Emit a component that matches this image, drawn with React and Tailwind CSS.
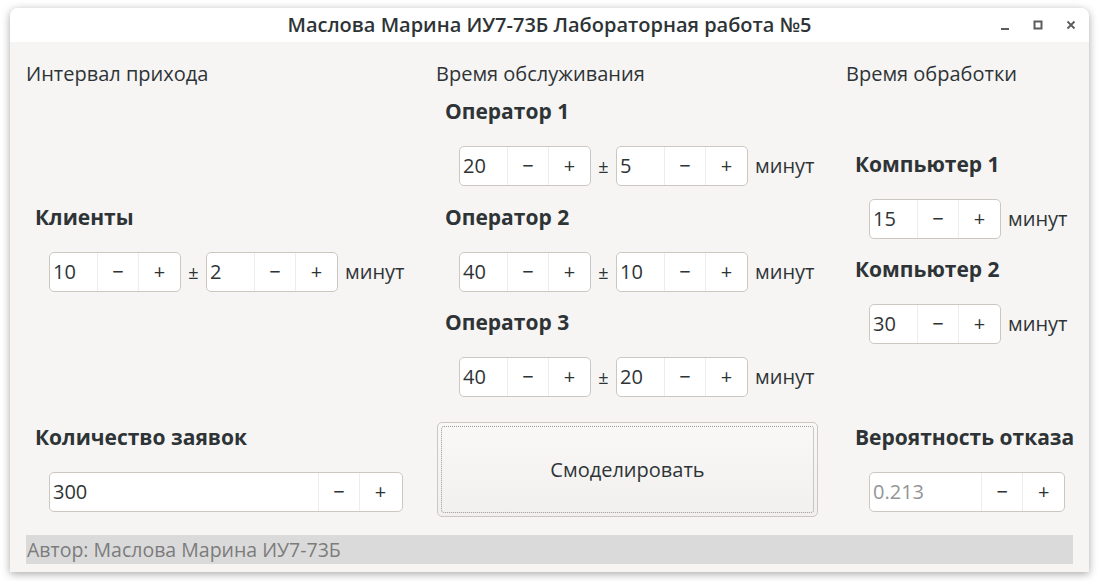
import React from "react";

const font = { fontFamily: '"Open Sans", "Noto Sans", sans-serif' };

function SpinBox({ value, entry = 47, muted = false }) {
  return (
    <div className="flex h-[40px] rounded-[5px] border border-[#cdc7c2] bg-white overflow-hidden">
      <div
        className={`flex items-center pl-[3px] text-[20px] ${muted ? "text-[#929595]" : "text-[#2e3436]"}`}
        style={{ width: entry }}
      >
        {value}
      </div>
      <div className="flex w-[41px] items-center justify-center border-l border-[#f1ece8] text-[20px] text-[#2e3436]">
        −
      </div>
      <div className="flex w-[42px] items-center justify-center border-l border-[#f1ece8] text-[20px] text-[#2e3436]">
        +
      </div>
    </div>
  );
}

function RangeRow({ mean, spread, className = "" }) {
  return (
    <div className={`flex items-center ml-[23px] ${className}`}>
      <SpinBox value={mean} />
      <span className="w-[25px] text-center text-[18px] text-[#2e3436]">±</span>
      <SpinBox value={spread} />
      <span className="ml-[7px] text-[20px] text-[#2e3436]">минут</span>
    </div>
  );
}

function Label({ children, className = "" }) {
  return (
    <div className={`ml-[9px] h-[24px] leading-[24px] text-[21px] font-bold text-[#2e3436] whitespace-nowrap ${className}`}>
      {children}
    </div>
  );
}

function Header({ children }) {
  return (
    <div className="h-[24px] leading-[24px] text-[20px] text-[#2e3436]">{children}</div>
  );
}

export default function App() {
  return (
    <div className="w-[1099px] h-[581px] bg-white pt-[8px] pl-[10px]" style={font}>
      <div className="w-[1079px] h-[564px] flex flex-col rounded-t-[8px] bg-[#f6f5f4] shadow-[0_2px_8px_rgba(0,0,0,0.35)] overflow-hidden">
        {/* Title bar */}
        <div className="relative flex h-[34px] shrink-0 items-center justify-center bg-white">
          <span className="text-[20px] font-semibold text-[#2e3436]">
            Маслова Марина ИУ7-73Б Лабораторная работа №5
          </span>
          <div className="absolute right-[10px] top-0 flex h-[34px] items-center gap-[17px] text-[#5c5c5c]">
            <svg width="16" height="16" viewBox="0 0 16 16">
              <rect x="4" y="11" width="8" height="2" fill="currentColor" />
            </svg>
            <svg width="16" height="16" viewBox="0 0 16 16">
              <rect x="4.5" y="4.5" width="7" height="7" fill="none" stroke="currentColor" strokeWidth="2" />
            </svg>
            <svg width="16" height="16" viewBox="0 0 16 16">
              <path d="M4.5 4.5 L11.5 11.5 M11.5 4.5 L4.5 11.5" stroke="currentColor" strokeWidth="1.8" />
            </svg>
          </div>
        </div>

        {/* Content */}
        <div className="flex flex-1 flex-col px-[16px]">
          <div className="grid grid-cols-[410px_410px_1fr] pt-[20px]">
            {/* Column 1 */}
            <div className="flex flex-col">
              <Header>Интервал прихода</Header>
              <Label className="mt-[119px]">Клиенты</Label>
              <RangeRow mean="10" spread="2" className="mt-[23px]" />
              <Label className="mt-[133px]">Количество заявок</Label>
              <div className="ml-[23px] mt-[23px] w-[354px]">
                <SpinBox value="300" entry={268} />
              </div>
            </div>

            {/* Column 2 */}
            <div className="flex flex-col">
              <Header>Время обслуживания</Header>
              <Label className="mt-[13px]">Оператор 1</Label>
              <RangeRow mean="20" spread="5" className="mt-[23px]" />
              <Label className="mt-[19px]">Оператор 2</Label>
              <RangeRow mean="40" spread="10" className="mt-[23px]" />
              <Label className="mt-[18px]">Оператор 3</Label>
              <RangeRow mean="40" spread="20" className="mt-[23px]" />
              <button className="ml-[1px] mt-[25px] flex h-[95px] w-[381px] items-center justify-center rounded-[5px] border border-[#cdc7c2] bg-gradient-to-b from-[#f9f8f7] to-[#f1f0ee] p-[3px]">
                <span className="flex h-full w-full items-center justify-center rounded-[3px] border border-dotted border-[#9a9a9a] text-[20px] text-[#2e3436]">
                  Смоделировать
                </span>
              </button>
            </div>

            {/* Column 3 */}
            <div className="flex flex-col">
              <Header>Время обработки</Header>
              <Label className="mt-[66px]">Компьютер 1</Label>
              <div className="ml-[23px] mt-[23px] flex items-center">
                <SpinBox value="15" />
                <span className="ml-[7px] text-[20px] text-[#2e3436]">минут</span>
              </div>
              <Label className="mt-[18px]">Компьютер 2</Label>
              <div className="ml-[23px] mt-[23px] flex items-center">
                <SpinBox value="30" />
                <span className="ml-[7px] text-[20px] text-[#2e3436]">минут</span>
              </div>
              <Label className="mt-[81px]">Вероятность отказа</Label>
              <div className="ml-[23px] mt-[23px] w-[196px]">
                <SpinBox value="0.213" entry={112} muted />
              </div>
            </div>
          </div>

          {/* Status bar */}
          <div className="mt-[18px] flex h-[29px] items-center bg-[#dadada] pl-[1px] text-[19.5px] text-[#7c7c7c]">
            Автор: Маслова Марина ИУ7-73Б
          </div>
        </div>
      </div>
    </div>
  );
}
